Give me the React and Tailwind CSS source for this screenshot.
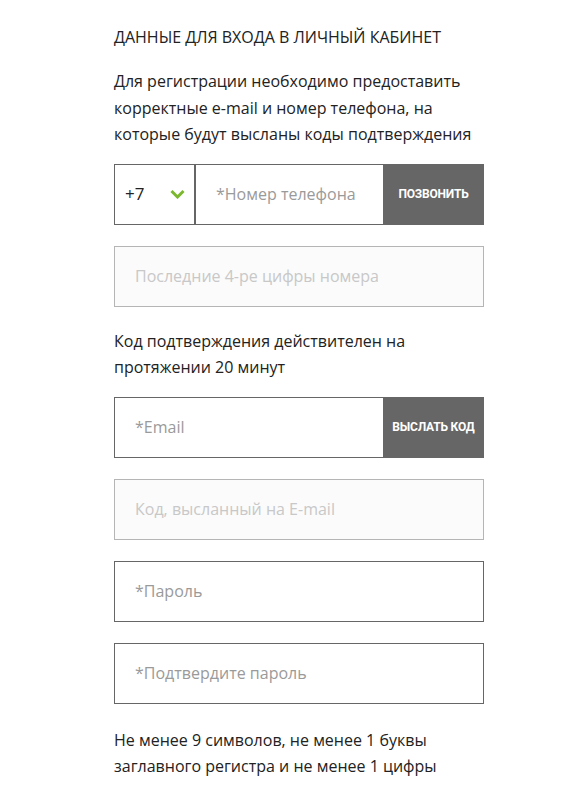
export default function App() {
  const font = { fontFamily: '"Open Sans", "Liberation Sans", sans-serif' };
  return (
    <div className="min-h-[803px] bg-white pl-[114px] pt-[25px]" style={font}>
      <div className="w-[370px] text-[#222]">
        <h2 className="text-[16px] leading-[24px] font-normal uppercase">Данные для входа в личный кабинет</h2>
        <p className="mt-[19px] text-[16px] leading-[26.5px]">
          Для регистрации необходимо предоставить корректные e-mail и номер телефона, на которые будут высланы коды подтверждения
        </p>

        <div className="mt-[16px] flex h-[61px] border border-[#666]">
          <div className="flex w-[81px] items-center justify-between border-r-2 border-[#666] pl-[10px] pr-[9px]">
            <span className="text-[17px]">+7</span>
            <svg width="15" height="10" viewBox="0 0 15 10" fill="none">
              <path d="M1.5 2 L7.5 8 L13.5 2" stroke="#7cb82f" strokeWidth="3" />
            </svg>
          </div>
          <input
            className="min-w-0 flex-1 bg-white pl-[20px] text-[16px] text-[#222] outline-none placeholder:text-[#9a9a9a]"
            placeholder="*Номер телефона"
            style={font}
          />
          <button
            className="-my-px -mr-px w-[101px] bg-[#666] text-[12px] font-bold uppercase text-white tracking-[-0.2px]"
            style={{ fontFamily: 'Roboto, "Liberation Sans", sans-serif' }}
          >
            Позвонить
          </button>
        </div>

        <input
          disabled
          className="mt-[21px] block h-[61px] w-full border border-[#b5b5b5] bg-[#fbfbfb] pl-[20px] text-[16px] outline-none placeholder:text-[#c8c8c8]"
          placeholder="Последние 4-ре цифры номера"
          style={font}
        />

        <p className="mt-[21px] text-[16px] leading-[26.5px]">
          Код подтверждения действителен на протяжении 20 минут
        </p>

        <div className="mt-[16px] flex h-[61px] border border-[#666]">
          <input
            className="min-w-0 flex-1 bg-white pl-[20px] text-[16px] text-[#222] outline-none placeholder:text-[#9a9a9a]"
            placeholder="*Email"
            style={font}
          />
          <button
            className="-my-px -mr-px w-[101px] bg-[#666] text-[12px] font-bold uppercase text-white tracking-[-0.2px]"
            style={{ fontFamily: 'Roboto, "Liberation Sans", sans-serif' }}
          >
            Выслать код
          </button>
        </div>

        <input
          disabled
          className="mt-[21px] block h-[61px] w-full border border-[#b5b5b5] bg-[#fbfbfb] pl-[20px] text-[16px] outline-none placeholder:text-[#c8c8c8]"
          placeholder="Код, высланный на E-mail"
          style={font}
        />
        <input
          className="mt-[21px] block h-[61px] w-full border border-[#666] bg-white pl-[20px] text-[16px] outline-none placeholder:text-[#9a9a9a]"
          placeholder="*Пароль"
          style={font}
        />
        <input
          className="mt-[21px] block h-[61px] w-full border border-[#666] bg-white pl-[20px] text-[16px] outline-none placeholder:text-[#9a9a9a]"
          placeholder="*Подтвердите пароль"
          style={font}
        />

        <p className="mt-[23px] text-[16px] leading-[26.5px]">
          Не менее 9 символов, не менее 1 буквы заглавного регистра и не менее 1 цифры
        </p>
      </div>
    </div>
  );
}
